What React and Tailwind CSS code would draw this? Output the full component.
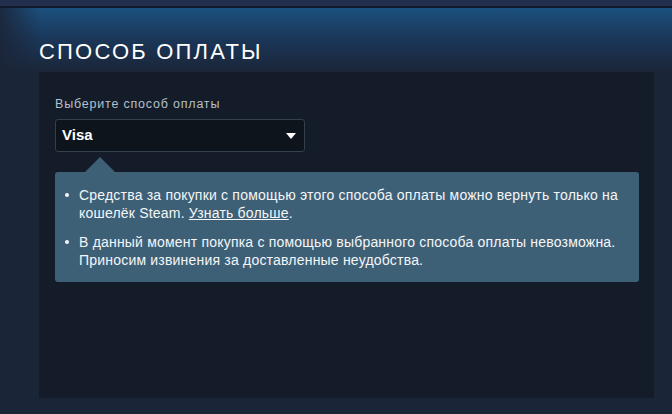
export default function App() {
  return (
    <div className="min-h-[414px] w-[672px] bg-[#1b2538] font-['Liberation_Sans',Arial,sans-serif] overflow-hidden">
      <div className="h-[6px] bg-[#22304e]" />
      <div className="h-[2px] bg-[#111a2c]" />
      <div className="bg-[linear-gradient(to_right,rgba(27,37,56,0.9)_0px,rgba(27,37,56,0)_40px),linear-gradient(to_bottom,#1b507e_0px,#1a3759_30px,#1b2538_64px)]">
        <div className="px-[39px] pt-[30px] pb-[6px]">
          <h1 className="text-[22px] leading-[28px] text-white tracking-[2.2px]">СПОСОБ ОПЛАТЫ</h1>
        </div>
        <div className="ml-[39px] mr-[18px] h-[326px] bg-[#131c28] pl-[16px] pr-[15px] pt-[24px]">
          <div className="text-[12.5px] leading-[16px] tracking-[0.8px] text-[#b4c1cc]">Выберите способ оплаты</div>
          <div className="mt-[7px] w-[250px] h-[33px] rounded-[3px] border border-[#33404e] bg-[#0e141c] flex items-center justify-between pl-[6px] pr-[8px]">
            <span className="text-white text-[15px] font-bold">Visa</span>
            <svg width="10" height="6" viewBox="0 0 10 6"><path d="M0 0H10L5 6Z" fill="#fff" /></svg>
          </div>
          <div className="mt-[5px] ml-[30px] w-0 h-0 border-l-[15px] border-r-[15px] border-b-[15px] border-l-transparent border-r-transparent border-b-[#3e6077]" />
          <div className="rounded-[3px] bg-[#3e6077] pl-[10px] pr-[10px] pt-[14px] pb-[13px] text-[14px] leading-[18px] tracking-[0.2px] text-[#f4f6f8]">
            <div className="flex">
              <div className="w-[14px] shrink-0 pt-[7px]"><div className="w-[4px] h-[4px] rounded-full bg-[#f4f6f8]" /></div>
              <p>Средства за покупки с помощью этого способа оплаты можно вернуть только на кошелёк Steam. <span className="underline">Узнать больше</span>.</p>
            </div>
            <div className="flex mt-[11px]">
              <div className="w-[14px] shrink-0 pt-[7px]"><div className="w-[4px] h-[4px] rounded-full bg-[#f4f6f8]" /></div>
              <p>В данный момент покупка с помощью выбранного способа оплаты невозможна. Приносим извинения за доставленные неудобства.</p>
            </div>
          </div>
        </div>
      </div>
    </div>
  );
}
